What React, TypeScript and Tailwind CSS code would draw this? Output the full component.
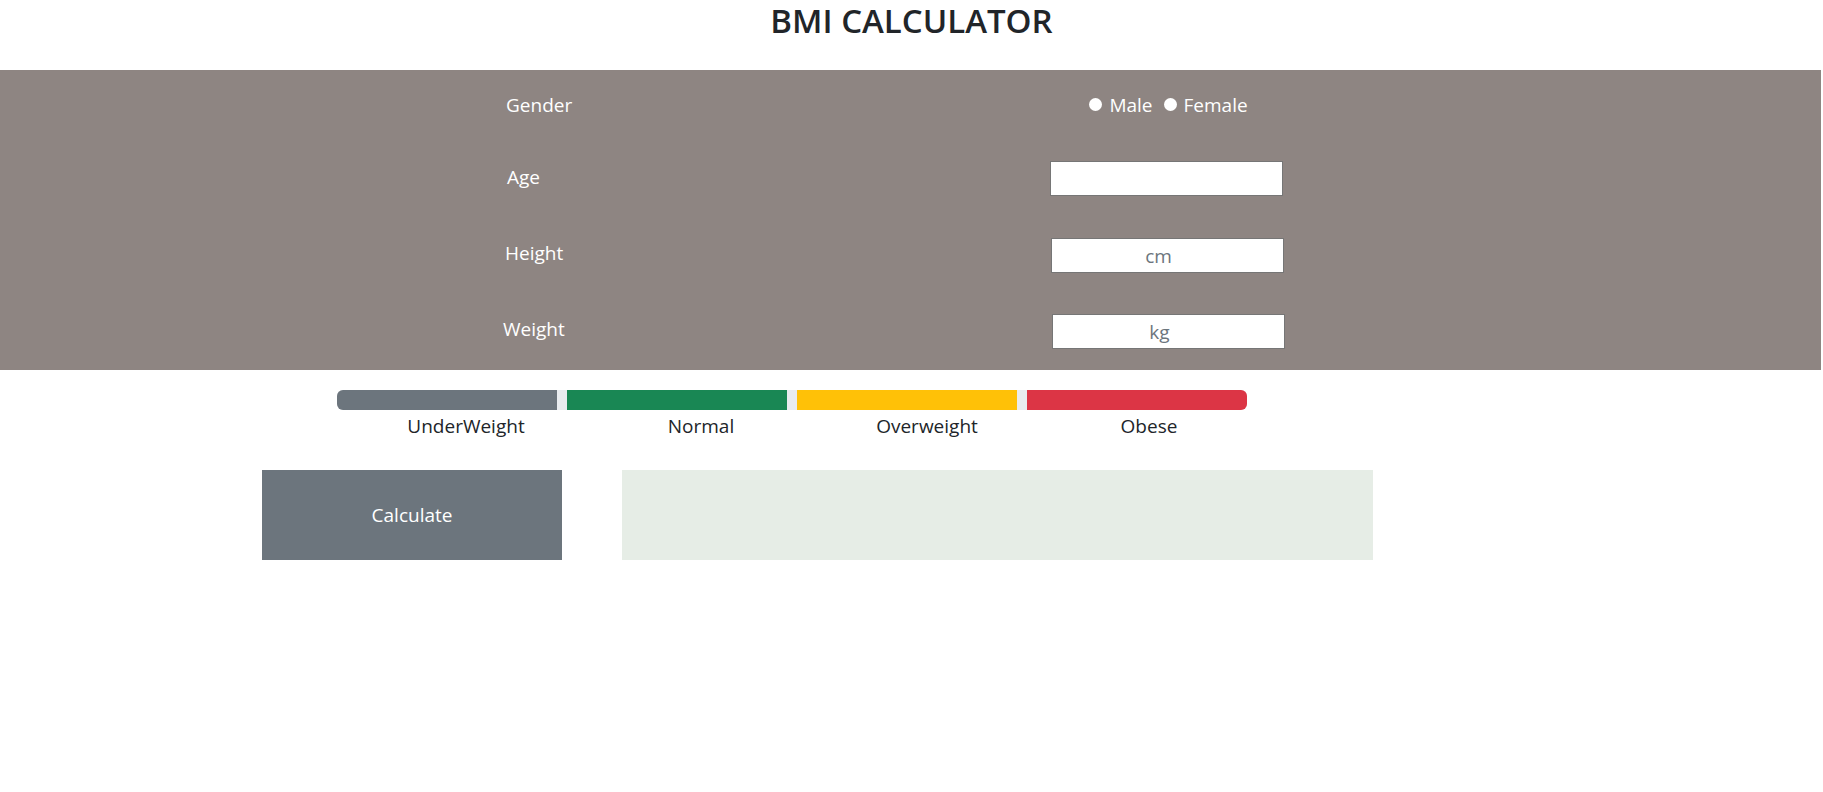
const App = () => {
  return (
    <div className="min-h-screen bg-white font-['Open_Sans',sans-serif]">
      <h1 className="h-[70px] text-center text-[33px] font-semibold leading-[42px] text-[#212529]">
        BMI CALCULATOR
      </h1>

      <div className="mr-[2px] bg-[#8e8582] pt-[18px] pb-[21px] text-[19px] text-white">
        <div className="flex h-[35px] items-center">
          <div className="w-[1051px] pl-[506px]">Gender</div>
          <div className="flex w-[233px] items-center justify-center pl-[2px]">
            <label className="flex items-center gap-[7px]">
              <input
                type="radio"
                name="gender"
                className="mb-[2px] h-[13px] w-[13px] appearance-none rounded-full bg-white"
              />
              Male
            </label>
            <label className="ml-[11px] flex items-center gap-[7px]">
              <input
                type="radio"
                name="gender"
                className="mb-[2px] h-[13px] w-[13px] appearance-none rounded-full bg-white"
              />
              Female
            </label>
          </div>
        </div>

        <div className="mt-[38px] flex h-[35px] items-center">
          <div className="w-[1050px] pb-[2px] pl-[507px]">Age</div>
          <input
            type="text"
            className="h-[35px] w-[233px] border border-[#767676] bg-white text-center text-[19px] text-[#212529] outline-none"
          />
        </div>

        <div className="mt-[42px] flex h-[35px] items-center">
          <div className="w-[1051px] pb-[5px] pl-[505px]">Height</div>
          <input
            type="text"
            placeholder="cm"
            className="h-[35px] w-[233px] border border-[#767676] bg-white pr-[18px] text-center text-[19px] text-[#212529] outline-none placeholder:text-[#6c757d]"
          />
        </div>

        <div className="mt-[41px] flex h-[35px] items-center">
          <div className="w-[1052px] pb-[5px] pl-[503px]">Weight</div>
          <input
            type="text"
            placeholder="kg"
            className="h-[35px] w-[233px] border border-[#767676] bg-white pr-[18px] text-center text-[19px] text-[#212529] outline-none placeholder:text-[#6c757d]"
          />
        </div>
      </div>

      <div className="mt-[20px] ml-[337px] flex h-[20px] w-[910px] gap-[10px] overflow-hidden rounded-[6px] bg-[#e9ecef]">
        <div className="flex-1 bg-[#6c757d]" />
        <div className="flex-1 bg-[#198754]" />
        <div className="flex-1 bg-[#ffc107]" />
        <div className="flex-1 bg-[#dc3545]" />
      </div>
      <div className="mt-[3px] ml-[353px] flex text-center text-[19px] leading-[26px] text-[#212529]">
        <span className="w-[226px]">UnderWeight</span>
        <span className="w-[244px]">Normal</span>
        <span className="w-[208px]">Overweight</span>
        <span className="w-[236px]">Obese</span>
      </div>

      <div className="mt-[31px] flex">
        <button className="ml-[262px] h-[90px] w-[300px] bg-[#6c757d] text-[19px] text-white">
          Calculate
        </button>
        <div className="ml-[60px] h-[90px] w-[751px] bg-[#e6ede6]" />
      </div>
    </div>
  );
};

export default App;
